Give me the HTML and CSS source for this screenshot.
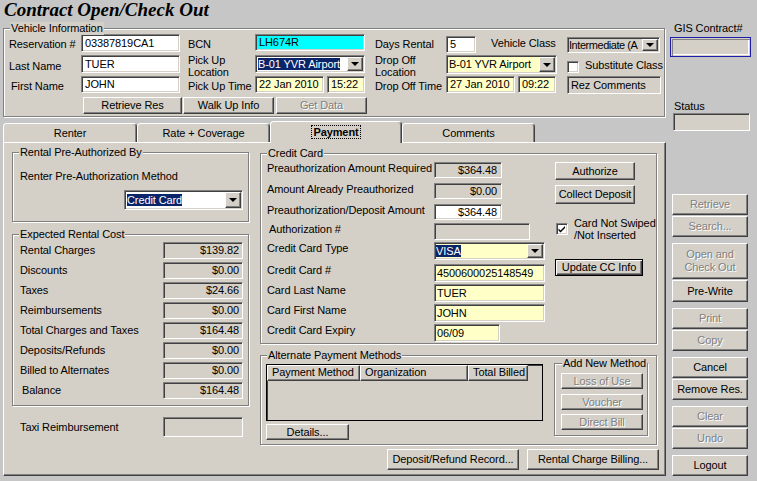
FILE: index.html
```html
<!DOCTYPE html>
<html>
<head>
<meta charset="utf-8">
<title>Contract Open/Check Out</title>
<link rel="stylesheet" href="styles.css">
</head>
<body>
<div class="window">
  <div class="main">
    <h1 class="title">Contract Open/Check Out</h1>

    <div class="group vehicle">
      <span class="legend">Vehicle Information</span>
      <div class="vgrid">
        <span class="lbl">Reservation #</span>
        <div class="field white h18">03387819CA1</div>
        <span class="lbl c3">BCN</span>
        <div class="field cyan h17 w110">LH674R</div>
        <span class="lbl c5">Days Rental</span>
        <div class="days"><div class="field white dayin">5</div><span class="lbl vc">Vehicle Class</span></div>
        <div class="c7"><div class="combo gray vclass"><span class="ctext">Intermediate (A</span><span class="drop"></span></div></div>

        <span class="lbl two">Last Name</span>
        <div class="field white h18">TUER</div>
        <span class="lbl c3 two">Pick Up<br>Location</span>
        <div class="combo white pick"><span class="ctext"><span class="sel">B-01 YVR Airport</span></span><span class="drop"></span></div>
        <span class="lbl c5 two">Drop Off<br>Location</span>
        <div class="combo yellow dropoff"><span class="ctext">B-01 YVR Airport</span><span class="drop"></span></div>
        <div class="c7 subst"><span class="check"></span><span class="lbl">Substitute Class</span></div>

        <span class="lbl ind">First Name</span>
        <div class="field white h17">JOHN</div>
        <span class="lbl c3">Pick Up Time</span>
        <div class="dt"><div class="field yellow date">22 Jan 2010</div><div class="field yellow time">15:22</div></div>
        <span class="lbl c5">Drop Off Time</span>
        <div class="dt"><div class="field yellow date">27 Jan 2010</div><div class="field yellow time">09:22</div></div>
        <div class="c7"><div class="field gray rez">Rez Comments</div></div>

        <div class="vbtns">
          <button class="btn rr">Retrieve Res</button>
          <button class="btn wu">Walk Up Info</button>
          <button class="btn gd dis">Get Data</button>
        </div>
      </div>
    </div>

    <div class="tabs">
      <div class="tab t1">Renter</div>
      <div class="tab t2">Rate + Coverage</div>
      <div class="tab t3 active"><span class="focus">Payment</span></div>
      <div class="tab t4">Comments</div>
    </div>

    <div class="panel">
      <div class="lcol">
        <div class="group g-preauth">
          <span class="legend">Rental Pre-Authorized By</span>
          <div class="lbl">Renter Pre-Authorization Method</div>
          <div class="combo white method"><span class="ctext"><span class="sel">Credit Card</span></span><span class="drop"></span></div>
        </div>

        <div class="group g-cost">
          <span class="legend">Expected Rental Cost</span>
          <div class="costgrid">
            <span class="lbl">Rental Charges</span><div class="field gray right">$139.82</div>
            <span class="lbl">Discounts</span><div class="field gray right">$0.00</div>
            <span class="lbl">Taxes</span><div class="field gray right">$24.66</div>
            <span class="lbl">Reimbursements</span><div class="field gray right">$0.00</div>
            <span class="lbl">Total Charges and Taxes</span><div class="field gray right">$164.48</div>
            <span class="lbl">Deposits/Refunds</span><div class="field gray right">$0.00</div>
            <span class="lbl">Billed to Alternates</span><div class="field gray right">$0.00</div>
            <span class="lbl ind">Balance</span><div class="field gray right">$164.48</div>
          </div>
        </div>

        <div class="taxi">
          <span class="lbl">Taxi Reimbursement</span>
          <div class="field gray"></div>
        </div>
      </div>

      <div class="rcol">
        <div class="group g-cc">
          <span class="legend">Credit Card</span>
          <div class="ccgrid">
            <span class="lbl">Preauthorization Amount Required</span><div class="field gray right amt">$364.48</div>
            <span class="lbl">Amount Already Preauthorized</span><div class="field gray right amt">$0.00</div>
            <span class="lbl">Preauthorization/Deposit Amount</span><div class="field white right amt">$364.48</div>
            <span class="lbl ind">Authorization #</span><div class="field gray auth"></div>
            <span class="lbl">Credit Card Type</span><div class="combo yellow cctype"><span class="ctext"><span class="sel">VISA</span></span><span class="drop"></span></div>
            <span class="lbl">Credit Card #</span><div class="field yellow ccf">4500600025148549</div>
            <span class="lbl">Card Last Name</span><div class="field yellow ccf">TUER</div>
            <span class="lbl">Card First Name</span><div class="field yellow ccf">JOHN</div>
            <span class="lbl">Credit Card Expiry</span><div class="field yellow exp">06/09</div>
          </div>
          <div class="ccside">
            <button class="btn authz">Authorize</button>
            <button class="btn collect">Collect Deposit</button>
            <div class="swipe"><span class="check on"><svg width="8" height="8" viewBox="0 0 8 8"><path d="M0.5 3.5 L2.5 5.5 L7 1 L7 3 L2.5 7.5 L0.5 5.5 Z" fill="#000"/></svg></span><span class="lbl">Card Not Swiped<br>/Not Inserted</span></div>
            <button class="btn default update">Update CC Info</button>
          </div>
        </div>

        <div class="group g-alt">
          <span class="legend">Alternate Payment Methods</span>
          <div class="altleft">
            <div class="list">
              <div class="lhead">
                <span class="hcell h1c">Payment Method</span>
                <span class="hcell h2c">Organization</span>
                <span class="hcell h3c">Total Billed</span>
              </div>
            </div>
            <button class="btn details">Details...</button>
          </div>
          <div class="group g-add">
            <span class="legend">Add New Method</span>
            <button class="btn dis addb">Loss of Use</button>
            <button class="btn dis addb">Voucher</button>
            <button class="btn dis addb">Direct Bill</button>
          </div>
        </div>

        <div class="bottombtns">
          <button class="btn bb">Deposit/Refund Record...</button>
          <button class="btn bb">Rental Charge Billing...</button>
        </div>
      </div>
    </div>
  </div>

  <div class="side">
    <div class="slabel">GIS Contract#</div>
    <div class="field gis"></div>
    <div class="slabel status-l">Status</div>
    <div class="field gray status"></div>
    <div class="sbtns">
      <div class="bgroup"><button class="btn dis">Retrieve</button><button class="btn dis">Search...</button></div>
      <div class="bgroup"><button class="btn dis tall">Open and<br>Check Out</button><button class="btn pw">Pre-Write</button></div>
      <div class="bgroup"><button class="btn dis">Print</button><button class="btn dis">Copy</button></div>
      <div class="bgroup"><button class="btn">Cancel</button><button class="btn">Remove Res.</button></div>
      <div class="bgroup"><button class="btn dis">Clear</button><button class="btn dis">Undo</button></div>
      <div class="bgroup"><button class="btn">Logout</button></div>
    </div>
  </div>
</div>
</body>
</html>
```

FILE: styles.css
```css
* { box-sizing: border-box; }
html, body { margin: 0; padding: 0; }
body {
  width: 757px; height: 481px; overflow: hidden;
  background: #c6c6c6;
  font-family: "Liberation Sans", Arial, sans-serif;
  font-size: 11px; line-height: 13px; color: #000; font-weight: 400;
  letter-spacing: -0.1px;
}
.window { display: grid; grid-template-columns: 666px 91px; height: 481px; }
.main { display: flex; flex-direction: column; }

.title {
  margin: 0; height: 28px; padding-left: 4px;
  font-family: "Liberation Serif", "Times New Roman", serif;
  font-style: italic; font-weight: bold; font-size: 19px; line-height: 20px;
  letter-spacing: 0;
}

/* group boxes */
.group {
  position: relative;
  border: 1px solid #808080;
  box-shadow: inset 1px 1px #fff, 1px 1px #fff;
  background: #d4d0c8;
}
.legend {
  position: absolute; top: -7px; left: 6px; padding: 0 1px;
  background: #d4d0c8; line-height: 13px; white-space: nowrap;
}

/* generic controls */
.lbl { white-space: nowrap; }
.ind { padding-left: 2px; }
.field {
  border: 1px solid; border-color: #808080 #fff #fff #808080;
  box-shadow: inset 1px 1px #404040, inset -1px -1px #d4d0c8;
  padding: 0 3px; display: flex; align-items: center;
  white-space: nowrap; overflow: hidden; background: #d4d0c8;
}
.white { background: #fff; }
.yellow { background: #ffffc8; }
.cyan { background: #00ffff; }
.gray { background: #d4d0c8; }
.right { justify-content: flex-end; }

.combo {
  border: 1px solid; border-color: #808080 #fff #fff #808080;
  box-shadow: inset 1px 1px #404040, inset -1px -1px #d4d0c8;
  display: flex; align-items: center; padding-left: 2px; white-space: nowrap; overflow: hidden;
}
.combo .ctext { flex: 1; overflow: hidden; }
.sel { background: #0a246a; color: #fff; }
.drop {
  width: 16px; flex: none; align-self: stretch; margin: 1px 1px 1px 0;
  background: #d4d0c8;
  border: 1px solid; border-color: #fff #404040 #404040 #fff;
  box-shadow: inset -1px -1px #808080;
  display: flex; align-items: center; justify-content: center;
}
.drop::after {
  content: ""; width: 0; height: 0;
  border-left: 4px solid transparent; border-right: 4px solid transparent;
  border-top: 4px solid #000; margin-right: 1px;
}

.btn {
  font-family: "Liberation Sans", Arial, sans-serif; font-size: 11px; font-weight: 400;
  font-style: normal; letter-spacing: -0.1px; color: #000; background: #d4d0c8;
  border: 1px solid; border-color: #fff #404040 #404040 #fff;
  box-shadow: inset -1px -1px #808080;
  padding: 0; margin: 0; display: flex; align-items: center; justify-content: center;
  line-height: 13px; white-space: nowrap; cursor: default;
}
.dis { color: #808080; text-shadow: 1px 1px #fff; }
.default {
  border: 1px solid #000;
  box-shadow: inset 1px 1px #fff, inset -1px -1px #404040, inset -2px -2px #808080;
}

.check {
  width: 12px; height: 12px; flex: none; background: #fff;
  border: 1px solid; border-color: #808080 #fff #fff #808080;
  box-shadow: inset 1px 1px #404040, inset -1px -1px #d4d0c8;
  display: flex; align-items: center; justify-content: center;
}

/* vehicle information */
.vehicle { margin-left: 3px; width: 662px; height: 89px; padding: 5px 0 0 5px; }
.vgrid {
  display: grid;
  grid-template-columns: 72px 99px 75px 111px 80px 111px 103px;
  grid-template-rows: 21px 21px 21px 17px;
  align-items: start;
}
.vgrid > .lbl { align-self: center; }
.vgrid .two { line-height: 12px; }
.c3 { padding-left: 8px; }
.c5 { padding-left: 9px; }
.c7 { padding-left: 10px; }
.h18 { height: 18px; }
.h17 { height: 17px; }
.w110 { width: 110px; }
.days { display: flex; align-items: center; height: 19px; }
.dayin { width: 30px; height: 17px; margin-top: 1px; }
.vc { margin-left: 15px; }
.vclass { width: 93px; height: 16px; margin-top: 3px; background: #d4d0c8; padding-left: 1px; }
.vclass .ctext { letter-spacing: -0.45px; }
.pick { width: 110px; height: 18px; }
.dropoff { width: 111px; height: 19px; }
.subst { display: flex; align-items: center; height: 21px; }
.subst .check { margin-top: 3px; }
.subst .lbl { margin-left: 6px; }
.dt { display: flex; gap: 3px; }
.date { width: 69px; height: 17px; }
.time { width: 38px; height: 17px; }
.dt:last-of-type .date { width: 70px; }
.rez { width: 94px; height: 18px; }
.vbtns { grid-column: 2 / 6; display: flex; margin-left: 2px; }
.vbtns .btn { height: 17px; }
.rr { width: 99px; }
.wu { width: 91px; margin-left: 1px; }
.gd { width: 91px; margin-left: 2px; }

/* tabs */
.tabs { display: flex; align-items: flex-end; height: 25px; margin-left: 3px; }
.tab {
  height: 19px; background: #d4d0c8; font-weight: 400;
  border: 1px solid; border-color: #fff #404040 transparent #fff; border-bottom: none;
  border-radius: 4px 4px 0 0;
  box-shadow: inset -1px 0 #808080;
  display: flex; align-items: center; justify-content: center; white-space: nowrap;
}
.t1 { width: 134px; }
.t2 { width: 133px; }
.t3 { width: 132px; }
.t4 { width: 133px; }
.tab.active { height: 22px; margin-bottom: -1px; position: relative; z-index: 1; font-weight: bold; padding-bottom: 2px; }
.focus { outline: 1px dotted #000; padding: 0 1px; line-height: 12px; }

/* panel */
.panel {
  margin-left: 3px; width: 663px; height: 334px;
  border: 1px solid; border-color: #fff #404040 #404040 #fff;
  box-shadow: inset -1px -1px #808080;
  background: #d4d0c8;
  display: flex; gap: 10px; padding: 9px 0 0 8px;
}
.lcol { width: 238px; display: flex; flex-direction: column; }
.g-preauth { width: 237px; height: 70px; padding: 17px 0 0 7px; }
.method { width: 119px; height: 20px; margin: 7px 0 0 104px; }
.g-cost { width: 237px; height: 172px; margin-top: 12px; padding: 7px 0 0 7px; }
.costgrid { display: grid; grid-template-columns: 143px 80px; grid-auto-rows: 17px; row-gap: 3px; align-items: center; }
.costgrid .field { height: 17px; }
.taxi { margin-top: 11px; display: grid; grid-template-columns: 143px 80px; padding-left: 8px; height: 20px; align-items: center; }
.taxi .field { height: 20px; }

.rcol { width: 398px; display: flex; flex-direction: column; padding-top: 1px; }
.g-cc { width: 397px; height: 191px; display: flex; padding: 8px 0 0 6px; }
.ccgrid {
  display: grid; grid-template-columns: 167px 111px;
  grid-template-rows: 21px 21px 19px 19px 22px 20px 20px 20px 18px;
  align-items: start;
}
.amt { width: 68px; height: 16px; padding-right: 4px; }
.auth { width: 96px; height: 17px; }
.cctype { width: 111px; height: 18px; padding-left: 1px; }
.ccf { width: 111px; height: 18px; padding-left: 2px; }
.exp { width: 66px; height: 18px; padding-left: 2px; }
.ccside { margin-left: 10px; display: flex; flex-direction: column; align-items: flex-start; }
.authz { width: 80px; height: 18px; }
.collect { width: 80px; height: 19px; margin-top: 5px; }
.swipe { display: flex; margin-top: 13px; height: 24px; }
.swipe .check { margin: 6px 0 0 1px; }
.swipe .lbl { margin-left: 6px; line-height: 12px; }
.update { width: 88px; height: 17px; margin-top: 18px; }

.g-alt { width: 397px; height: 90px; margin-top: 11px; display: flex; align-items: flex-start; padding: 8px 0 0 5px; }
.altleft { width: 277px; display: flex; flex-direction: column; }
.list { width: 277px; height: 57px; border: 1px solid #000; box-shadow: inset 1px 1px #404040; background: #d4d0c8; }
.lhead { display: flex; }
.hcell {
  height: 16px; padding-left: 4px; line-height: 13px; white-space: nowrap;
  border: 1px solid; border-color: #fff #404040 #404040 #fff;
  box-shadow: inset -1px -1px #808080;
}
.h1c { width: 93px; }
.h2c { width: 108px; }
.h3c { width: 60px; }
.details { width: 83px; height: 16px; margin-top: 3px; }
.g-add { width: 94px; height: 73px; margin: -1px 0 0 11px; padding: 9px 0 0 6px; display: flex; flex-direction: column; }
.g-add .legend { left: 7px; }
.addb { width: 82px; height: 16px; }
.addb + .addb { margin-top: 5px; }
.addb:last-child { margin-top: 4px; }
.bottombtns { display: flex; justify-content: flex-end; gap: 8px; margin-top: 4px; margin-right: -1px; }
.bb { width: 132px; height: 21px; }

/* side column */
.side { padding: 22px 0 0 4px; display: flex; flex-direction: column; align-items: flex-start; }
.slabel { padding-left: 4px; line-height: 13px; white-space: nowrap; }
.gis {
  width: 81px; height: 20px; margin-top: 2px; background: #d4d0c8;
  border: 1px solid #1c1ca8;
  box-shadow: inset 1px 1px #d4d0c8, inset 2px 2px #808080, inset -1px -1px #d4d0c8, inset -2px -2px #fff;
}
.status-l { margin-top: 43px; }
.status { width: 77px; height: 18px; margin-left: 3px; }
.sbtns { margin: 63px 0 0 2px; display: flex; flex-direction: column; gap: 6px; }
.bgroup { display: flex; flex-direction: column; gap: 1px; }
.bgroup .btn { width: 76px; height: 21px; }
.bgroup .btn.tall { height: 36px; line-height: 13px; white-space: normal; text-align: center; }
.bgroup .btn.pw { height: 22px; }
```
